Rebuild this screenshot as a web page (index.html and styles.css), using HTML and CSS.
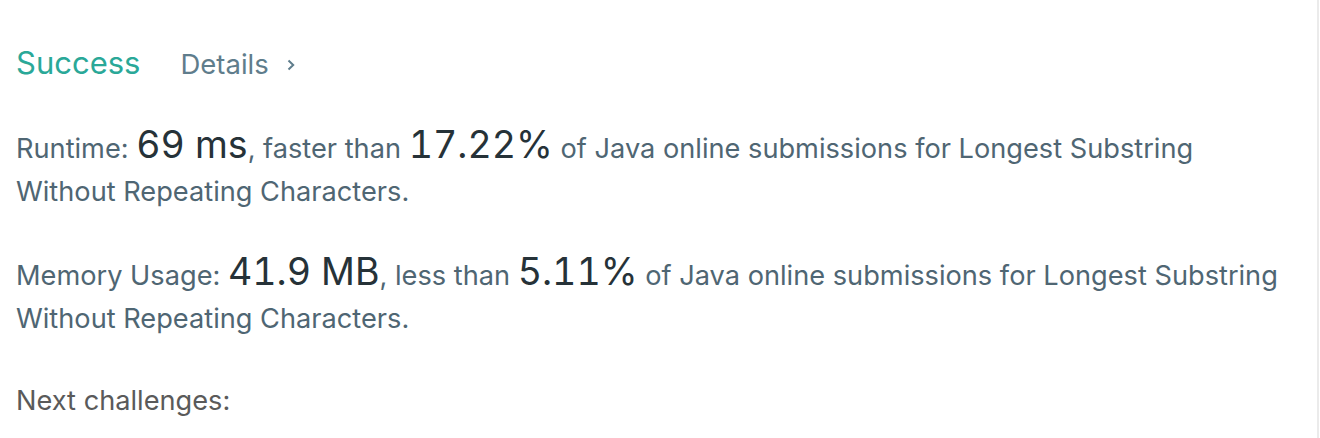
FILE: index.html
```html
<!DOCTYPE html>
<html lang="en">
<head>
<meta charset="utf-8">
<title>Submission result</title>
<link rel="stylesheet" href="styles.css">
</head>
<body>
<div class="panel">
  <div class="result-head">
    <span class="status">Success</span>
    <a class="details">Details
      <svg class="chev" width="10" height="12" viewBox="0 0 10 12"><path d="M2.5 1.5 L7.2 6 L2.5 10.5" fill="none" stroke="currentColor" stroke-width="2"/></svg>
    </a>
  </div>
  <p class="stat">Runtime: <span class="big">69 ms</span>, faster than <span class="big">17.22%</span> of Java online submissions for Longest Substring Without Repeating Characters.</p>
  <p class="stat">Memory Usage: <span class="big">41.9 MB</span>, less than <span class="big">5.11%</span> of Java online submissions for Longest Substring Without Repeating Characters.</p>
  <p class="next">Next challenges:</p>
</div>
</body>
</html>
```
FILE: styles.css
```css
html, body {
  margin: 0;
  padding: 0;
  background: #ffffff;
}
body {
  font-family: "Inter", "Noto Sans", sans-serif;
  -webkit-font-smoothing: antialiased;
}
.panel {
  box-sizing: border-box;
  width: 1319px;
  height: 438px;
  border-right: 2px solid #ebebeb;
  padding: 42px 0 0 16px;
  overflow: hidden;
}
.result-head {
  display: flex;
  align-items: baseline;
  gap: 40px;
  height: 42px;
}
.status {
  font-size: 31px;
  color: #2aa898;
  line-height: 42px;
}
.details {
  display: inline-flex;
  align-items: center;
  gap: 17px;
  font-size: 27.5px;
  color: #5f7d8c;
  line-height: 42px;
}
.chev {
  color: #5f7d8c;
  position: relative;
  top: 1px;
}
.stat {
  margin: 42px 0 0;
  font-size: 27.2px;
  line-height: 43px;
  color: #4f6673;
  max-width: 1272px;
}
.stat + .stat {
  margin-top: 40px;
}
.big {
  font-size: 37.5px;
  line-height: 1;
  color: #263238;
  font-variant-numeric: tabular-nums;
}
.next {
  margin: 39px 0 0;
  font-size: 27.2px;
  line-height: 43px;
  color: #5a5a5a;
}
```
